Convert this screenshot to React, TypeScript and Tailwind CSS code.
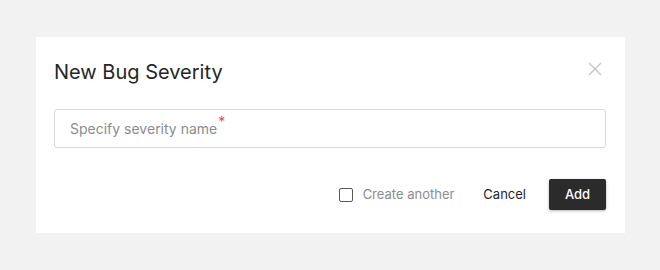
import React from "react";

export default function App() {
  return (
    <div className="w-[660px] h-[270px] bg-[#f2f2f2] pt-[37px] pl-[36px]" style={{ fontFamily: "Inter, 'Noto Sans', sans-serif" }}>
      <div className="w-[589px] h-[196px] bg-white px-[18px] pt-[22px] flex flex-col">
        <div className="flex items-center justify-between h-[26px]">
          <div className="text-[20px] text-[#262626] leading-[26px]">New Bug Severity</div>
          <svg width="14" height="14" viewBox="0 0 14 14" className="mr-[5px] self-start mt-[3px]">
            <path d="M1 1L13 13M13 1L1 13" stroke="#c4c4c4" strokeWidth="1.4" />
          </svg>
        </div>
        <div className="mt-[24px] h-[39px] border border-[#d9d9d9] rounded-[3px] flex items-center pl-[15px] w-[552px]">
          <span className="text-[14px] text-[#8c8c8c]">Specify severity name</span>
          <span className="text-[#e5484d] text-[14px] self-start mt-[5px] ml-[1px] leading-none">*</span>
        </div>
        <div className="mt-[31px] flex items-center justify-end pr-[1px]">
          <label className="flex items-center">
            <span className="w-[14px] h-[14px] border border-[#595959] rounded-[2px] bg-white" />
            <span className="ml-[10px] text-[13px] text-[#8c8c8c]">Create another</span>
          </label>
          <span className="ml-[29px] text-[13px] text-[#262626]">Cancel</span>
          <button className="ml-[23px] w-[57px] h-[31px] bg-[#2b2b2b] text-white text-[13px] font-medium rounded-[2px] shadow-[0_1px_3px_rgba(0,0,0,0.3)]">Add</button>
        </div>
      </div>
    </div>
  );
}
